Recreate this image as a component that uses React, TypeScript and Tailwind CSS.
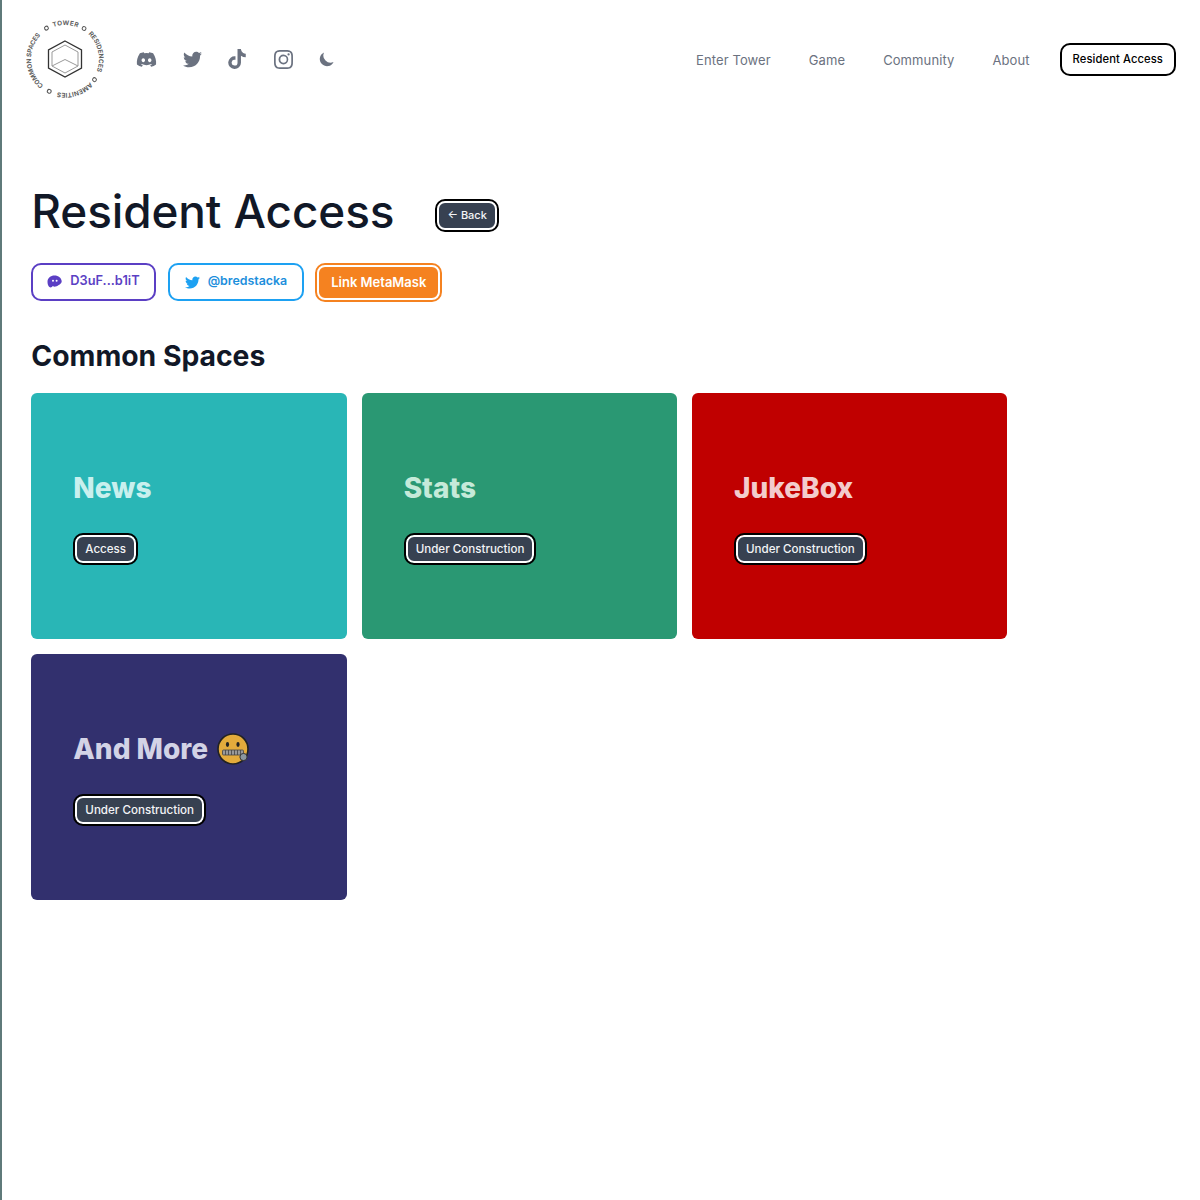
import React from 'react'
import { FaDiscord, FaTwitter, FaTiktok } from 'react-icons/fa'
import { BsInstagram } from 'react-icons/bs'
import { HiMoon } from 'react-icons/hi'

const NAV_LINKS = ['Enter Tower', 'Game', 'Community', 'About']

const CARDS = [
  { title: 'News', action: 'Access', bg: 'bg-[#29b6b6]', text: 'text-[#c9f0ee]' },
  { title: 'Stats', action: 'Under Construction', bg: 'bg-[#2a9873]', text: 'text-[#c5ead9]' },
  { title: 'JukeBox', action: 'Under Construction', bg: 'bg-[#c00000]', text: 'text-[#f3cccc]' },
  { title: 'And More', action: 'Under Construction', bg: 'bg-[#32306e]', text: 'text-[#d3d3e6]', emoji: true }
]

// text on the logo ring: label and the clock angle it starts at
const RING_LABELS = [
  { label: 'COMMON SPACES', angle: 219, spacing: -0.15 },
  { label: 'TOWER', angle: -20, spacing: 0.3 },
  { label: 'RESIDENCES', angle: 43, spacing: 0 },
  { label: 'AMENITIES', angle: 133, spacing: 0 }
]

const RING_DOTS = [-31, 32, 125, 206]

function Logo() {
  return (
    <svg width="80" height="80" viewBox="0 0 80 80" className="shrink-0">
      <defs>
        <path id="ring" d="M39 6 a34 34 0 1 1 -0.01 0" />
      </defs>
      {RING_LABELS.map((item) => (
        <text
          key={item.label}
          transform={`rotate(${item.angle} 39 40)`}
          fontSize="6.4"
          fontWeight="700"
          fill="#5f5f5f"
          letterSpacing={item.spacing}
          fontFamily="Inter, sans-serif"
        >
          <textPath href="#ring">{item.label}</textPath>
        </text>
      ))}
      {RING_DOTS.map((angle) => (
        <circle key={angle} cx="39" cy="4" r="1.9" fill="none" stroke="#555" strokeWidth="1" transform={`rotate(${angle} 39 40)`} />
      ))}
      <path d="M39 22 L55.5 31 V49 L39 58 L22.5 49 V31 Z" fill="none" stroke="#333" strokeWidth="1.3" />
      <path d="M39 26 L52 33 V47 L39 54 L26 47 V33 Z M26 47 L39 40.5 L52 47" fill="none" stroke="#999" strokeWidth="1" />
    </svg>
  )
}

function ZipperFace() {
  return (
    <svg width="32" height="32" viewBox="0 0 32 32" className="shrink-0">
      <circle cx="16" cy="16" r="15" fill="#e3ab3c" stroke="#222" strokeWidth="1.6" />
      <ellipse cx="10.5" cy="11.5" rx="1.6" ry="2.4" fill="#222" />
      <ellipse cx="21" cy="11.5" rx="1.6" ry="2.4" fill="#222" />
      <rect x="5.5" y="17" width="21" height="5" rx="1" fill="#999" stroke="#444" strokeWidth="0.8" />
      <path d="M8.5 17v5M11.5 17v5M14.5 17v5M17.5 17v5M20.5 17v5M23.5 17v5" stroke="#444" strokeWidth="0.8" />
      <circle cx="26.5" cy="24" r="3.6" fill="#8b97a0" stroke="#333" strokeWidth="1" />
    </svg>
  )
}

function PhantomIcon() {
  return (
    <svg width="15" height="13" viewBox="0 0 15 13" fill="currentColor" className="shrink-0">
      <path d="M7.5 0.5C3.6 0.5 0.5 3 0.5 6.8 0.5 10 1.9 12.5 3.6 12.5 4.6 12.5 5.2 11.7 5.8 11.1 6.6 11.6 7.6 11.9 8.6 11.6 11.4 10.8 14.7 8.6 14.7 6.6 14.7 3 11.4 0.5 7.5 0.5Z" />
      <circle cx="6" cy="5.8" r="1" fill="#fff" />
      <circle cx="9.6" cy="5.8" r="1" fill="#fff" />
    </svg>
  )
}

function DarkButton({ label, small }: { label: string; small?: boolean }) {
  return (
    <span className={`inline-flex items-center rounded-lg bg-[#374151] text-[#f3f4f6] font-medium border-2 border-white outline-2 outline-black ${small ? 'h-[29px] px-[8px] text-[11px]' : 'h-[28px] px-[8px] text-[11.6px]'}`}>
      {label}
    </span>
  )
}

export default function App() {
  return (
    <div className="min-h-[1200px] bg-white border-l-2 border-[#5f7a7a] font-['Inter',sans-serif]">
      {/* Header */}
      <header className="flex items-center justify-between pl-[24px] pr-[24px] pt-[19px]">
        <div className="flex items-center">
          <Logo />
          <nav className="flex items-center ml-[30px] text-[#6b7280]">
            <FaDiscord size={21} />
            <FaTwitter size={19} className="ml-[26px]" />
            <FaTiktok size={20} className="ml-[25px]" />
            <BsInstagram size={19} className="ml-[27px]" />
            <HiMoon size={18} className="ml-[25px]" />
          </nav>
        </div>
        <div className="flex items-center gap-[38px] text-[13px] tracking-[0.1px] text-[#6b7280]">
          <div className="flex items-center gap-[38px] pt-[4px]">
            {NAV_LINKS.map((link) => (
              <a key={link}>{link}</a>
            ))}
          </div>
          <span className="flex items-center h-[33px] px-[11px] ml-[-8px] pt-[1px] rounded-[10px] border-2 border-black text-[11.2px] font-medium text-black">Resident Access</span>
        </div>
      </header>

      <main className="pl-[29.3px] pt-[86px]">
        <div className="flex items-center">
          <h1 className="text-[45.9px] leading-[54px] font-medium text-[#111827] tracking-[-0.1px]">Resident Access</h1>
          <span className="ml-[43px] mt-[7px]"><DarkButton label="← Back" small /></span>
        </div>

        {/* Linked accounts */}
        <div className="flex items-center gap-[12px] mt-[24px]">
          <span className="flex items-center gap-[8px] h-[38px] px-[14px] pb-[2px] rounded-[10px] border-2 border-[#5b3fc4] text-[#5b3fc4] text-[12.8px] font-semibold">
            <PhantomIcon /> D3uF...b1iT
          </span>
          <span className="flex items-center gap-[8px] h-[38px] px-[15px] pb-[2px] rounded-[10px] border-2 border-[#1da1f2] text-[#1d8fdc] text-[12.4px] font-semibold">
            <FaTwitter size={15} className="text-[#1da1f2] mt-[2px]" /> @bredstacka
          </span>
          <span className="flex items-center h-[35px] px-[12px] pt-[1px] rounded-[8px] bg-[#f58220] border-2 border-white outline-2 outline-[#f58220] text-white text-[13px] font-semibold ml-[1px]">
            Link MetaMask
          </span>
        </div>

        <h2 className="text-[28.3px] leading-[36px] font-bold text-[#111827] mt-[37px]">Common Spaces</h2>

        <div className="grid grid-cols-3 gap-[15px] w-[976px] mt-[19px]">
          {CARDS.map((card) => (
            <div key={card.title} className={`h-[246px] rounded-md flex flex-col justify-center pl-[42px] ${card.bg}`}>
              <div className={`flex items-center gap-[9px] text-[28px] leading-[36px] font-extrabold ${card.text}`}>
                {card.title}
                {card.emoji && <ZipperFace />}
              </div>
              <div className="mt-[29px] mb-[-1px] ml-[2px]"><DarkButton label={card.action} /></div>
            </div>
          ))}
        </div>
      </main>
    </div>
  )
}
